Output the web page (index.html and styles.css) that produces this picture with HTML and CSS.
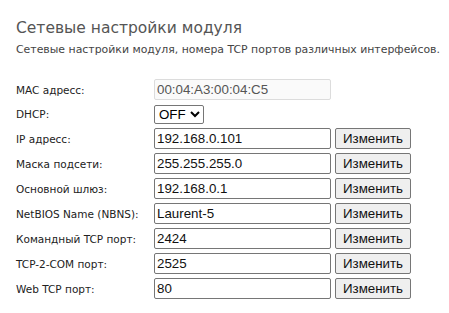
FILE: index.html
```html
<!DOCTYPE html>
<html lang="ru">
<head>
    <meta charset="UTF-8">
    <meta name="viewport" content="width=device-width, initial-scale=1.0">
    <title>Сетевые настройки модуля</title>
    <link rel="stylesheet" href="styles.css">
</head>
<body>
    <div class="page">
        <h2 class="title">Сетевые настройки модуля</h2>
        <p class="subtitle">Сетевые настройки модуля, номера TCP портов различных интерфейсов.</p>

        <div class="settings">
            <label>MAC адресс:</label>
            <input type="text" class="mac" value="00:04:A3:00:04:C5" readonly>
            <span></span>

            <label>DHCP:</label>
            <div><select class="dhcp"><option>OFF</option><option>ON</option></select></div>
            <span></span>

            <label>IP адресс:</label>
            <input type="text" value="192.168.0.101">
            <button>Изменить</button>

            <label>Маска подсети:</label>
            <input type="text" value="255.255.255.0">
            <button>Изменить</button>

            <label>Основной шлюз:</label>
            <input type="text" value="192.168.0.1">
            <button>Изменить</button>

            <label>NetBIOS Name (NBNS):</label>
            <input type="text" value="Laurent-5">
            <button>Изменить</button>

            <label>Командный TCP порт:</label>
            <input type="text" value="2424">
            <button>Изменить</button>

            <label>TCP-2-COM порт:</label>
            <input type="text" value="2525">
            <button>Изменить</button>

            <label>Web TCP порт:</label>
            <input type="text" value="80">
            <button>Изменить</button>
        </div>
    </div>
</body>
</html>
```

FILE: styles.css
```css
body {
    margin: 0;
    background-color: #fff;
    font-family: "DejaVu Sans", Verdana, sans-serif;
}
.page {
    padding: 18px 0 0 16px;
}
.title {
    margin: 0;
    font-size: 15.5px;
    font-weight: normal;
    color: #555;
    line-height: 20px;
}
.subtitle {
    margin: 5px 0 0 0;
    font-size: 10.9px;
    color: #444;
    line-height: 14px;
    white-space: nowrap;
}
.settings {
    display: grid;
    grid-template-columns: 134px 177px 76px;
    column-gap: 4px;
    row-gap: 4px;
    margin-top: 22px;
    align-items: center;
}
.settings label {
    font-size: 10.5px;
    color: #222;
}
.settings input {
    box-sizing: border-box;
    width: 177px;
    height: 21px;
    margin: 0;
    padding: 1px 2px;
    font-family: "Liberation Sans", Arial, sans-serif;
    font-size: 13.33px;
    color: #111;
    border: 1px solid #767676;
    border-radius: 2px;
}
.settings input.mac {
    background-color: #fafafa;
    border-color: #dcdcdc;
    color: #555;
}
.dhcp {
    height: 19px;
    width: 50px;
    margin: 0;
    font-family: "Liberation Sans", Arial, sans-serif;
    font-size: 13.33px;
    border: 1px solid #767676;
    border-radius: 2px;
    background-color: #fff;
}
.settings button {
    height: 21px;
    width: 76px;
    margin: 0;
    padding: 1px 6px;
    font-family: "Liberation Sans", Arial, sans-serif;
    font-size: 13.33px;
    color: #111;
    background-color: #efefef;
    border: 1px solid #767676;
    border-radius: 2px;
}
```
